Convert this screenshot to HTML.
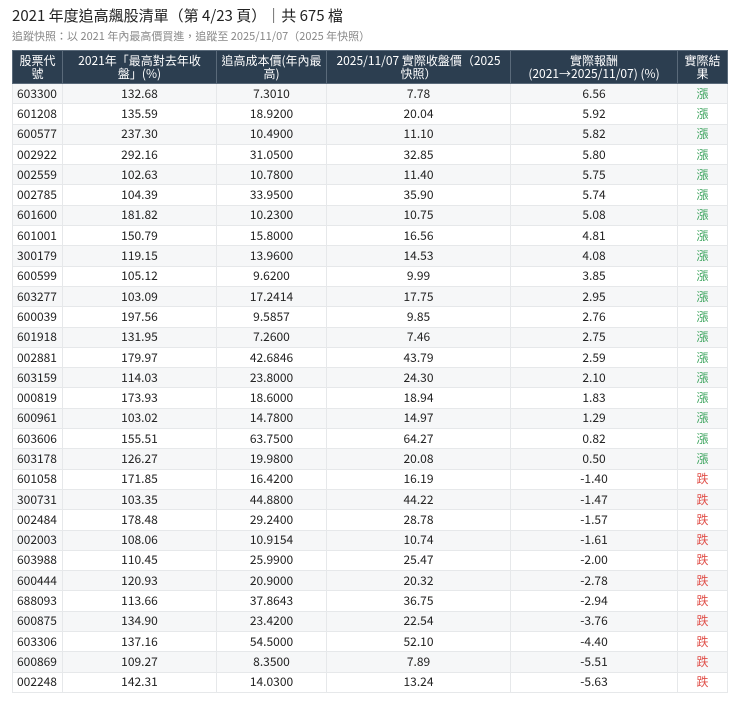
<!DOCTYPE html><html><head><meta charset="utf-8"><style>
body{margin:0;background:#fff;font-family:"Noto Sans CJK TC","Liberation Sans",sans-serif;color:#222}
.t{position:absolute;left:12px;top:6px;font-size:15px;line-height:20px;color:#222;white-space:nowrap}
.s{position:absolute;left:12px;top:29px;font-size:11px;line-height:14px;color:#888;white-space:nowrap}
table{position:absolute;left:12px;top:50px;border-collapse:collapse;width:715px;font-size:12px;table-layout:fixed}
th{background:#2c3e50;color:#fff;font-weight:normal;line-height:13px;height:33px;padding:0 2px;border:1px solid #5a6a7a;box-sizing:border-box}
td{height:20.3px;padding:0 4px;text-align:center;border:1px solid #e6e8ea;box-sizing:border-box;line-height:18px}
td:first-child{text-align:left}
tr:nth-child(even) td{background:#f6f7f8}
.u{color:#3aa35c}.d{color:#e0504a}
</style></head><body>
<div class="t">2021 年度追高飆股清單（第 4/23 頁）｜共 675 檔</div>
<div class="s">追蹤快照：以 2021 年內最高價買進，追蹤至 2025/11/07（2025 年快照）</div>
<table><colgroup><col style="width:50px"><col style="width:154px"><col style="width:110px"><col style="width:184px"><col style="width:167px"><col style="width:50px"></colgroup>
<tr><th>股票代<br>號</th><th>2021年「最高對去年收<br>盤」(%)</th><th>追高成本價(年內最<br>高)</th><th>2025/11/07 實際收盤價（2025<br>快照）</th><th>實際報酬<br>(2021→2025/11/07) (%)</th><th>實際結<br>果</th></tr>
<tr><td>603300</td><td>132.68</td><td>7.3010</td><td>7.78</td><td>6.56</td><td class="u">漲</td></tr>
<tr><td>601208</td><td>135.59</td><td>18.9200</td><td>20.04</td><td>5.92</td><td class="u">漲</td></tr>
<tr><td>600577</td><td>237.30</td><td>10.4900</td><td>11.10</td><td>5.82</td><td class="u">漲</td></tr>
<tr><td>002922</td><td>292.16</td><td>31.0500</td><td>32.85</td><td>5.80</td><td class="u">漲</td></tr>
<tr><td>002559</td><td>102.63</td><td>10.7800</td><td>11.40</td><td>5.75</td><td class="u">漲</td></tr>
<tr><td>002785</td><td>104.39</td><td>33.9500</td><td>35.90</td><td>5.74</td><td class="u">漲</td></tr>
<tr><td>601600</td><td>181.82</td><td>10.2300</td><td>10.75</td><td>5.08</td><td class="u">漲</td></tr>
<tr><td>601001</td><td>150.79</td><td>15.8000</td><td>16.56</td><td>4.81</td><td class="u">漲</td></tr>
<tr><td>300179</td><td>119.15</td><td>13.9600</td><td>14.53</td><td>4.08</td><td class="u">漲</td></tr>
<tr><td>600599</td><td>105.12</td><td>9.6200</td><td>9.99</td><td>3.85</td><td class="u">漲</td></tr>
<tr><td>603277</td><td>103.09</td><td>17.2414</td><td>17.75</td><td>2.95</td><td class="u">漲</td></tr>
<tr><td>600039</td><td>197.56</td><td>9.5857</td><td>9.85</td><td>2.76</td><td class="u">漲</td></tr>
<tr><td>601918</td><td>131.95</td><td>7.2600</td><td>7.46</td><td>2.75</td><td class="u">漲</td></tr>
<tr><td>002881</td><td>179.97</td><td>42.6846</td><td>43.79</td><td>2.59</td><td class="u">漲</td></tr>
<tr><td>603159</td><td>114.03</td><td>23.8000</td><td>24.30</td><td>2.10</td><td class="u">漲</td></tr>
<tr><td>000819</td><td>173.93</td><td>18.6000</td><td>18.94</td><td>1.83</td><td class="u">漲</td></tr>
<tr><td>600961</td><td>103.02</td><td>14.7800</td><td>14.97</td><td>1.29</td><td class="u">漲</td></tr>
<tr><td>603606</td><td>155.51</td><td>63.7500</td><td>64.27</td><td>0.82</td><td class="u">漲</td></tr>
<tr><td>603178</td><td>126.27</td><td>19.9800</td><td>20.08</td><td>0.50</td><td class="u">漲</td></tr>
<tr><td>601058</td><td>171.85</td><td>16.4200</td><td>16.19</td><td>-1.40</td><td class="d">跌</td></tr>
<tr><td>300731</td><td>103.35</td><td>44.8800</td><td>44.22</td><td>-1.47</td><td class="d">跌</td></tr>
<tr><td>002484</td><td>178.48</td><td>29.2400</td><td>28.78</td><td>-1.57</td><td class="d">跌</td></tr>
<tr><td>002003</td><td>108.06</td><td>10.9154</td><td>10.74</td><td>-1.61</td><td class="d">跌</td></tr>
<tr><td>603988</td><td>110.45</td><td>25.9900</td><td>25.47</td><td>-2.00</td><td class="d">跌</td></tr>
<tr><td>600444</td><td>120.93</td><td>20.9000</td><td>20.32</td><td>-2.78</td><td class="d">跌</td></tr>
<tr><td>688093</td><td>113.66</td><td>37.8643</td><td>36.75</td><td>-2.94</td><td class="d">跌</td></tr>
<tr><td>600875</td><td>134.90</td><td>23.4200</td><td>22.54</td><td>-3.76</td><td class="d">跌</td></tr>
<tr><td>603306</td><td>137.16</td><td>54.5000</td><td>52.10</td><td>-4.40</td><td class="d">跌</td></tr>
<tr><td>600869</td><td>109.27</td><td>8.3500</td><td>7.89</td><td>-5.51</td><td class="d">跌</td></tr>
<tr><td>002248</td><td>142.31</td><td>14.0300</td><td>13.24</td><td>-5.63</td><td class="d">跌</td></tr>
</table></body></html>
